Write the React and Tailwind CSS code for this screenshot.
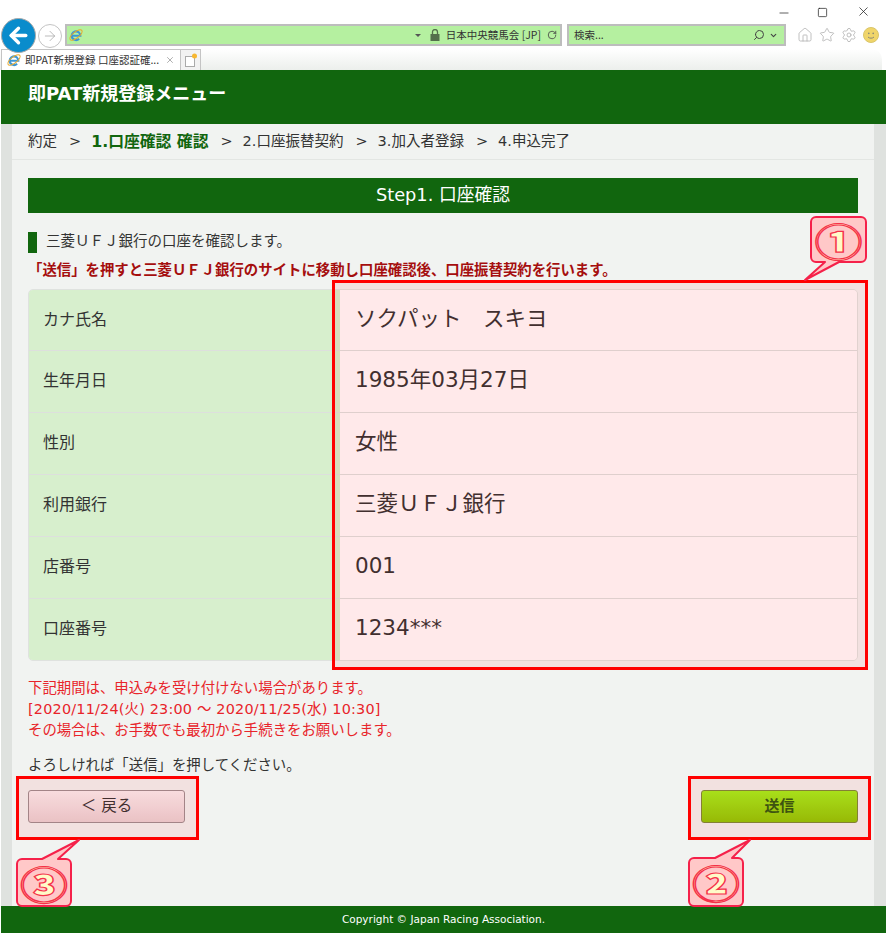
import { ArrowLeft, ArrowRight, ChevronDown, Home, RotateCw, Search, Settings, Star, X, Minus, Square } from "lucide-react"

const uiFont = "font-['Noto_Sans_CJK_JP','Noto_Sans',sans-serif]"
const pageFont = "font-['DejaVu_Sans','Noto_Sans_CJK_JP',sans-serif]"

const rows = [
  ["カナ氏名", "ソクパット　スキヨ"],
  ["生年月日", "1985年03月27日"],
  ["性別", "女性"],
  ["利用銀行", "三菱ＵＦＪ銀行"],
  ["店番号", "001"],
  ["口座番号", "1234***"],
]

function IeLogo({ size = 16 }) {
  return (
    <svg width={size} height={size} viewBox="0 0 16 16" fill="none" className="overflow-visible shrink-0">
      <path d="M3.500 8.800h9.500a5 5 0 1 0-1.500 3.600" stroke="#3d97d6" strokeWidth="2.400" />
      <ellipse cx="8" cy="8" rx="8.500" ry="3.600" transform="rotate(-38 8 8)" stroke="#e8a82a" strokeWidth="1.100" />
    </svg>
  )
}

// speech bubble from the annotation layer
function Callout({ className, path, label }) {
  return (
    <div className={`absolute ${className}`}>
      <svg className="absolute inset-0 overflow-visible" width="100%" height="100%">
        <path d={path} fill="#ffc8c8" stroke="#f5214a" strokeWidth="2" strokeLinejoin="round" />
      </svg>
      <span className="absolute inset-0 flex items-center justify-center text-[38px] leading-none font-black text-[#fffbc8] [-webkit-text-stroke:1.200px_#f5314a] scale-x-[1.25] font-['Noto_Sans_CJK_JP',sans-serif]">
        {label}
      </span>
    </div>
  )
}

function BrowserChrome() {
  return (
    <div className={`${uiFont} h-[70px] bg-white relative shrink-0`}>
      {/* window buttons */}
      <div className="h-[19px] flex items-end justify-end pr-[15px] text-[#222]">
        <Minus size={14} strokeWidth={1.6} className="text-[#555] mb-[-1px]" />
        <Square size={11} strokeWidth={1.6} className="ml-[26px] mb-[1px]" />
        <X size={15} strokeWidth={1.2} className="ml-[28px]" />
      </div>
      {/* address row */}
      <div className="h-[22px] mt-[5px] flex items-center">
        <div className="w-[35px] h-[35px] ml-[1px] rounded-full bg-[#0a8ccc] border border-[#aaa] flex items-center justify-center shrink-0 z-10">
          <ArrowLeft size={25} strokeWidth={3.2} className="text-white" />
        </div>
        <div className="w-[24px] h-[24px] ml-[2px] rounded-full border border-[#c4c4c4] flex items-center justify-center shrink-0 translate-y-[1px]">
          <ArrowRight size={16} strokeWidth={1.2} className="text-[#aaa]" />
        </div>
        <div className="w-[497px] h-[22px] ml-[3px] bg-[#b5f0a0] border-2 border-[#bdbdbd] flex items-center pl-[2px] pr-[3px] text-[10.500px] text-[#333] shrink-0">
          <IeLogo size={14} />
          <span className="ml-auto mr-[9px] w-0 h-0 border-x-[3px] border-x-transparent border-t-[3px] border-t-[#555]" />
          <svg width="10" height="12" viewBox="0 0 10 12" className="mr-[6px]">
            <rect x="0.500" y="5" width="9" height="7" fill="#54704c" />
            <path d="M2.500 5V3a2.500 2.500 0 0 1 5 0v2" fill="none" stroke="#54704c" strokeWidth="1.300" />
          </svg>
          <span className="whitespace-nowrap">日本中央競馬会 [JP]</span>
          <RotateCw size={10} strokeWidth={2} className="ml-[6px] text-[#444]" />
        </div>
        <div className="w-[219px] h-[22px] ml-[5px] bg-[#b5f0a0] border-2 border-[#bdbdbd] flex items-center pl-[5px] pr-[6px] text-[10.500px] text-[#333] shrink-0">
          <span>検索...</span>
          <Search size={12} strokeWidth={2} className="ml-auto mr-[4px] text-[#444] -scale-x-100" />
          <ChevronDown size={9} strokeWidth={3} className="text-[#444]" />
        </div>
        <div className="flex items-center gap-[6px] ml-[11px] text-[#b0b0b0]">
          <Home size={16} strokeWidth={1.2} />
          <Star size={16} strokeWidth={1.2} />
          <Settings size={16} strokeWidth={1.2} />
          <svg width="16" height="16" viewBox="0 0 16 16">
            <circle cx="8" cy="8" r="7.500" fill="#f0d56a" stroke="#d9c56a" />
            <circle cx="5.800" cy="6.400" r="0.800" fill="#887" />
            <circle cx="10.200" cy="6.400" r="0.800" fill="#887" />
            <path d="M5 10c1.500 1.600 4.500 1.600 6 0" fill="none" stroke="#887" />
          </svg>
        </div>
      </div>
      {/* tab row */}
      <div className="h-[21px] mt-[3px] flex bg-gradient-to-b from-white to-[#ecefec] rounded-tr-[10px] mr-[4px]">
        <div className="w-[180px] h-[21px] ml-[1px] bg-white border border-b-0 border-[#c4c4c4] flex items-center pl-[5px] pr-[5px] shrink-0">
          <IeLogo size={14} />
          <span className="text-[10.500px] leading-none text-[#333] ml-[4px] whitespace-nowrap">即PAT新規登録 口座認証確...</span>
          <X size={10} strokeWidth={1.6} className="ml-auto text-[#888]" />
        </div>
        <div className="w-[20px] h-[21px] border border-l-0 border-b-0 border-[#c4c4c4] bg-[#f2f2f2] flex items-center justify-center shrink-0">
          <svg width="14" height="15" viewBox="0 0 14 15">
            <rect x="1.500" y="3.500" width="9" height="10" fill="#fff" stroke="#aaa" />
            <circle cx="10.500" cy="3" r="2.500" fill="#f7b731" />
          </svg>
        </div>
      </div>
    </div>
  )
}

export default function App() {
  return (
    <div className={`${pageFont} relative w-[886px] h-[934px] overflow-hidden bg-white flex flex-col pb-[1px]`}>
      <BrowserChrome />

      <div className="h-[54px] ml-[1px] bg-[#11660e] flex items-start pl-[27px] pt-[10px] shrink-0">
        <h1 className="text-[18px] leading-[28px] font-bold text-white whitespace-nowrap">即PAT新規登録メニュー</h1>
      </div>

      <div className="flex-1 ml-[1px] bg-[#dfe2df] pl-[11px] pr-[12px] flex flex-col min-h-0">
        <main className="flex-1 bg-[#f1f3f1] flex flex-col">
          <nav className="h-[36px] border-b border-[#e3e6e3] pl-[16px] flex items-center text-[14.500px] text-[#333] whitespace-nowrap">
            <span>約定</span>
            <span className="ml-[12px] mr-[10px]">&gt;</span>
            <b className="text-[#11660e] font-bold text-[15.800px]">1.口座確認 確認</b>
            <span className="ml-[12px] mr-[10px]">&gt;</span>
            <span>2.口座振替契約</span>
            <span className="ml-[12px] mr-[10px]">&gt;</span>
            <span>3.加入者登録</span>
            <span className="ml-[12px] mr-[10px]">&gt;</span>
            <span>4.申込完了</span>
          </nav>

          <div className="px-[16px] pt-[18px] flex flex-col">
            <div className="h-[35px] bg-[#11660e] text-white text-[17.800px] flex items-center justify-center pb-[1px]">
              Step1. 口座確認
            </div>

            <div className="mt-[19px] h-[21px] flex items-center">
              <span className="w-[9px] h-[21px] bg-[#11660e]" />
              <span className="ml-[9px] text-[14.500px] text-[#333] pb-[2px]">三菱ＵＦＪ銀行の口座を確認します。</span>
            </div>

            <p className="mt-[7px] text-[14.400px] leading-[20px] font-bold text-[#a50e0e] whitespace-nowrap">
              「送信」を押すと三菱ＵＦＪ銀行のサイトに移動し口座確認後、口座振替契約を行います。
            </p>

            <div className="mt-[9px] border border-[#dfe2df] rounded-[5px] overflow-hidden">
              {rows.map(([label, value], i) => (
                <div
                  key={label}
                  className={`flex ${i === 0 || i === rows.length - 1 ? "h-[61px]" : "h-[62px]"} ${i < rows.length - 1 ? "border-b border-[#dddfdd]" : ""}`}
                >
                  <div className="w-[311px] bg-[#d7efcd] flex items-center pl-[14px] pb-[1px] text-[16px] text-[#333]">{label}</div>
                  <div className="flex-1 bg-[#fffbfc] flex items-center pl-[15px] pb-[2px] text-[21.500px] text-[#333]">{value}</div>
                </div>
              ))}
            </div>

            <div className="mt-[17px] text-[14.400px] leading-[21px] text-[#e8242a] whitespace-nowrap">
              <p>下記期間は、申込みを受け付けない場合があります。</p>
              <p className="tracking-[0.2px]">[2020/11/24(火) 23:00 ～ 2020/11/25(水) 10:30]</p>
              <p>その場合は、お手数でも最初から手続きをお願いします。</p>
            </div>

            <p className="mt-[14px] text-[14.400px] leading-[21px] text-[#333]">よろしければ「送信」を押してください。</p>

            <div className="mt-[14px] flex justify-between">
              <button className="w-[157px] h-[33px] rounded-[3px] border border-[#9d8f92] bg-gradient-to-b from-[#f8edef] to-[#e9d1d4] text-[15.500px] text-[#333]">
                ＜ 戻る
              </button>
              <button className="w-[157px] h-[33px] rounded-[3px] border border-[#7b8a3a] bg-gradient-to-b from-[#a2f01c] to-[#90c806] text-[15px] font-bold text-[#2f5a12]">
                送信
              </button>
            </div>
          </div>
        </main>
      </div>

      <footer className="h-[27px] ml-[1px] bg-[#11660e] text-white text-[10.500px] flex items-center justify-center shrink-0">
        Copyright © Japan Racing Association.
      </footer>

      {/* annotation overlays */}
      <div className="absolute left-[332px] top-[280px] w-[536px] h-[390px] border-[3px] border-[#ff0000] bg-[#ff000012]" />
      <div className="absolute left-[16px] top-[776px] w-[183px] h-[64px] border-[3px] border-[#ff0000] bg-[#ff000012]" />
      <div className="absolute left-[688px] top-[776px] w-[183px] h-[64px] border-[3px] border-[#ff0000] bg-[#ff000012]" />

      <Callout
        className="left-[810px] top-[216px] w-[57px] h-[47px]"
        label="①"
        path="M6 1H51a5 5 0 0 1 5 5V41a5 5 0 0 1-5 5H29L-5 64L15 46H6a5 5 0 0 1-5-5V6a5 5 0 0 1 5-5Z"
      />
      <Callout
        className="left-[688px] top-[857px] w-[56px] h-[50px]"
        label="②"
        path="M6 1H27L62-17L44 1H50a5 5 0 0 1 5 5V44a5 5 0 0 1-5 5H6a5 5 0 0 1-5-5V6a5 5 0 0 1 5-5Z"
      />
      <Callout
        className="left-[16px] top-[858px] w-[56px] h-[49px]"
        label="③"
        path="M6 1H26L63-18L42 1H50a5 5 0 0 1 5 5V43a5 5 0 0 1-5 5H6a5 5 0 0 1-5-5V6a5 5 0 0 1 5-5Z"
      />
    </div>
  )
}
